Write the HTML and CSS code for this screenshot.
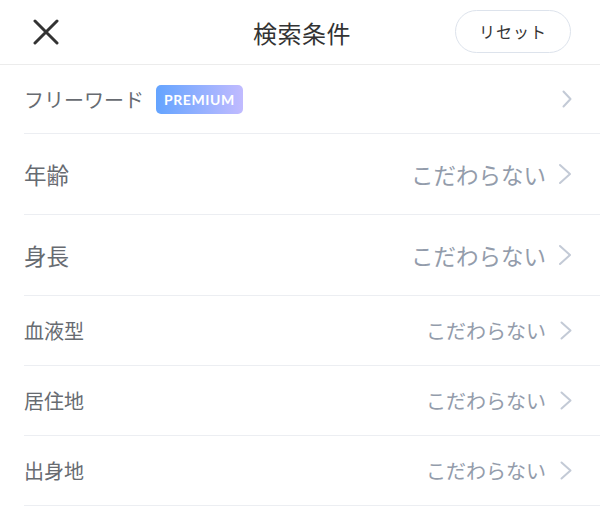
FILE: index.html
```html
<!DOCTYPE html>
<html lang="ja">
<head>
  <meta charset="UTF-8" />
  <meta name="viewport" content="width=device-width, initial-scale=1" />
  <title>検索条件</title>
  <link rel="stylesheet" href="styles.css">
</head>
<body>

  <header class="top">
    <button class="close-btn" aria-label="閉じる">
      <svg width="26" height="26" viewBox="0 0 26 26">
        <path d="M2 2 L24 24 M24 2 L2 24" stroke="#333" stroke-width="3" stroke-linecap="round" fill="none"/>
      </svg>
    </button>
    <h1 class="title">検索条件</h1>
    <button class="reset-btn">リセット</button>
  </header>

  <ul class="list">
    <li class="row">
      <span class="label">フリーワード</span>
      <span class="badge">PREMIUM</span>
      <span class="value"></span>
      <svg class="chev chev-sm" viewBox="0 0 10 18"><polyline points="1.5,1.5 8.5,9 1.5,16.5"/></svg>
    </li>
    <li class="row row-lg">
      <span class="label">年齢</span>
      <span class="value">こだわらない</span>
      <svg class="chev chev-lg" viewBox="0 0 14 22"><polyline points="2,2 12,11 2,20"/></svg>
    </li>
    <li class="row row-lg">
      <span class="label">身長</span>
      <span class="value">こだわらない</span>
      <svg class="chev chev-lg" viewBox="0 0 14 22"><polyline points="2,2 12,11 2,20"/></svg>
    </li>
    <li class="row">
      <span class="label">血液型</span>
      <span class="value">こだわらない</span>
      <svg class="chev" viewBox="0 0 12 19"><polyline points="1.5,1.5 10.5,9.5 1.5,17.5"/></svg>
    </li>
    <li class="row">
      <span class="label">居住地</span>
      <span class="value">こだわらない</span>
      <svg class="chev" viewBox="0 0 12 19"><polyline points="1.5,1.5 10.5,9.5 1.5,17.5"/></svg>
    </li>
    <li class="row">
      <span class="label">出身地</span>
      <span class="value">こだわらない</span>
      <svg class="chev" viewBox="0 0 12 19"><polyline points="1.5,1.5 10.5,9.5 1.5,17.5"/></svg>
    </li>
  </ul>

</body>
</html>
```

FILE: styles.css
```css
body {
  margin: 0;
  background: #fff;
  font-family: "Noto Sans CJK JP", "Noto Sans", sans-serif;
  color: #333;
}

/* ヘッダー */
.top {
  height: 64px;
  display: grid;
  grid-template-columns: 1fr auto 1fr;
  align-items: center;
  padding: 0 29px 0 33px;
  border-bottom: 1px solid #ececec;
}
.close-btn {
  background: none;
  border: none;
  padding: 0;
  width: 26px;
  height: 26px;
  margin-top: -1px;
}
.close-btn svg {
  display: block;
}
.title {
  margin: 0;
  font-size: 24px;
  font-weight: 400;
  color: #333;
  letter-spacing: 0.5px;
}
.reset-btn {
  justify-self: end;
  width: 116px;
  height: 43px;
  border: 1.5px solid #dde3ec;
  border-radius: 22px;
  background: #fff;
  font-family: inherit;
  font-size: 16px;
  color: #333;
  letter-spacing: 1px;
  margin-top: -2px;
}

/* 条件リスト */
.list {
  list-style: none;
  margin: 0 0 0 24px;
  padding: 0;
}
.row {
  display: flex;
  align-items: center;
  height: 69px;
  padding-right: 28px;
  border-bottom: 1px solid #eceef2;
}
.row:first-child {
  height: 68px;
}
.row-lg {
  height: 80px;
}
.label {
  font-size: 20px;
  color: #676b71;
}
.row-lg .label,
.row-lg .value {
  font-size: 22.5px;
}
.value {
  margin-left: auto;
  font-size: 20px;
  color: #939cab;
}
.badge {
  margin-left: 12px;
  height: 29px;
  padding: 0 8px;
  display: flex;
  align-items: center;
  border-radius: 5px;
  background: linear-gradient(90deg, #64a4ff, #c1bbff);
  color: #fff;
  font-family: "Lato", sans-serif;
  font-weight: 700;
  font-size: 14px;
  letter-spacing: 0.6px;
}
.chev {
  width: 12px;
  height: 19px;
  margin-left: 14px;
  fill: none;
  stroke: #c3cad6;
  stroke-width: 2;
  stroke-linecap: round;
  stroke-linejoin: round;
}
.chev-sm {
  width: 10px;
  height: 18px;
}
.chev-lg {
  width: 14px;
  height: 22px;
  margin-left: 12px;
}
```
